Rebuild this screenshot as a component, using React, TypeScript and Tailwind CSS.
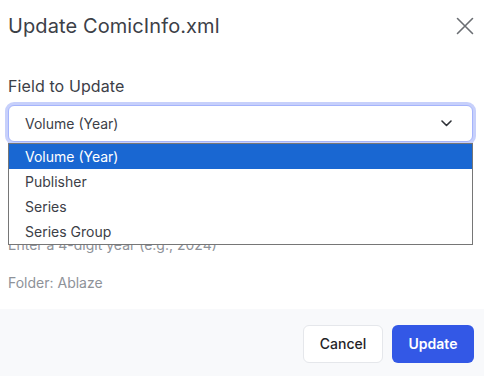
import React from 'react'

const OPTIONS = ['Volume (Year)', 'Publisher', 'Series', 'Series Group']

function CloseIcon() {
  return (
    <svg width="18" height="18" viewBox="0 0 18 18" fill="none" stroke="#6b6e73" strokeWidth="1.6" strokeLinecap="round">
      <path d="M1.5 1.5 L16.5 16.5 M16.5 1.5 L1.5 16.5" />
    </svg>
  )
}

function Chevron() {
  return (
    <svg width="11" height="7" viewBox="0 0 11 7" fill="none" stroke="#2f3237" strokeWidth="1.6" strokeLinecap="round" strokeLinejoin="round">
      <path d="M1 1 L5.5 5.5 L10 1" />
    </svg>
  )
}

export default function App() {
  return (
    <div className="w-[484px] h-[376px] overflow-hidden bg-white flex flex-col font-['Inter','Noto_Sans',sans-serif]">
      {/* Cabecera */}
      <div className="flex items-start justify-between pl-2 pr-[10px] pt-3">
        <h2 className="text-xl leading-7 font-normal tracking-[0.1px] text-[#3c4047]">Update ComicInfo.xml</h2>
        <button className="mt-[5px]" aria-label="Close">
          <CloseIcon />
        </button>
      </div>

      {/* Cuerpo */}
      <div className="pl-2 pr-[11px] pt-[34px]">
        <label className="block text-base leading-6 font-normal tracking-[0.1px] text-[#3c4047] mb-[7px]">Field to Update</label>

        <div className="relative h-[37px] rounded-md border border-[#a5b4fc] ring-[3px] ring-[#c7d0fb] bg-white flex items-center justify-between pl-4 pr-5">
          <span className="text-sm text-[#3c4047]">Volume (Year)</span>
          <Chevron />

          {/* Lista desplegada */}
          <div className="absolute -left-px -right-px top-[calc(100%+2px)] z-10 border border-[#767676] bg-white">
            {OPTIONS.map((opt, i) => (
              <div
                key={opt}
                className={
                  i === 0
                    ? 'h-[25px] flex items-center pl-4 text-sm bg-[#1967d2] text-white'
                    : 'h-[25px] flex items-center pl-4 text-sm text-[#3c4047]'
                }
              >
                {opt}
              </div>
            ))}
          </div>
        </div>

        {/* Campo de valor (tapado por la lista) */}
        <div className="mt-4">
          <div className="h-6 mb-2" />
          <div className="h-[37px] rounded-md border border-gray-300" />
          <p className="mt-2 text-sm leading-5 text-[#8e9299]">Enter a 4-digit year (e.g., 2024)</p>
        </div>

        <p className="mt-[18px] text-sm leading-5 text-[#8e9299]">Folder: Ablaze</p>
      </div>

      {/* Pie */}
      <div className="mt-4 flex-1 bg-[#f8f9fb] flex justify-end items-start gap-[9px] pt-4 pr-[10px]">
        <button className="h-[38px] w-[80px] rounded-md border border-gray-200 bg-white text-sm font-medium text-[#1f2328]">
          Cancel
        </button>
        <button className="h-[38px] w-[82px] rounded-md bg-[#3358e6] text-sm font-semibold text-white">
          Update
        </button>
      </div>
    </div>
  )
}
